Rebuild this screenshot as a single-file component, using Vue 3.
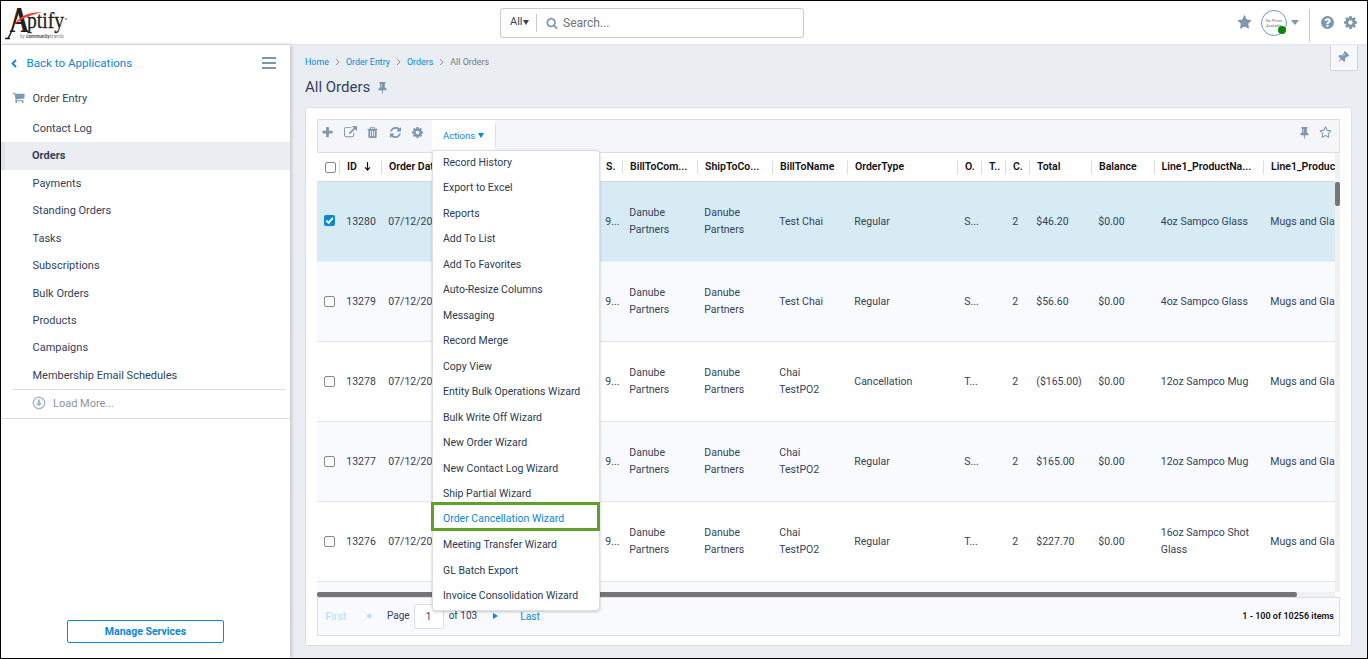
<script setup>
import { ref, computed } from 'vue'

const icons = {
  cog: 'M1152 896q0-106-75-181t-181-75-181 75-75 181 75 181 181 75 181-75 75-181zm512-109v222q0 12-8 23t-20 13l-185 28q-19 54-39 91 35 50 107 138 10 12 10 25t-9 23q-27 37-99 108t-94 71q-12 0-26-9l-138-108q-44 23-91 38-16 136-29 186-7 28-36 28h-222q-14 0-24.5-8.5t-11.5-21.5l-28-184q-49-16-90-37l-141 107q-10 9-25 9-14 0-25-11-126-114-165-168-7-10-7-23 0-12 8-23 15-21 51-66.5t54-70.5q-27-50-41-99l-183-27q-13-2-21-12.5t-8-23.5v-222q0-12 8-23t19-13l186-28q14-46 39-92-40-57-107-138-10-12-10-24 0-10 9-23 26-36 98.5-107.5t94.5-71.5q13 0 26 10l138 107q44-23 91-38 16-136 29-186 7-28 36-28h222q14 0 24.5 8.5t11.5 21.5l28 184q49 16 90 37l142-107q9-9 24-9 13 0 25 10 129 119 165 170 7 8 7 22 0 12-8 23-15 21-51 66.5t-54 70.5q26 50 41 98l183 28q13 2 21 12.5t8 23.5z',
  star: 'M1728 647q0 22-26 48l-363 354 86 500q1 7 1 20 0 21-10.5 35.5t-30.5 14.5q-19 0-40-12l-449-236-449 236q-22 12-40 12-21 0-31.5-14.5t-10.5-35.5q0-6 2-20l86-500-364-354q-25-27-25-48 0-37 56-46l502-73 225-455q19-41 49-41t49 41l225 455 502 73q56 9 56 46z',
  starO: 'M1201 1004l306-297-422-62-189-382-189 382-422 62 306 297-73 421 378-199 377 199zm527-357q0 22-26 48l-363 354 86 500q1 7 1 20 0 50-41 50-19 0-40-12l-449-236-449 236q-22 12-40 12-21 0-31.5-14.5t-10.5-35.5q0-6 2-20l86-500-364-354q-25-27-25-48 0-37 56-46l502-73 225-455q19-41 49-41t49 41l225 455 502 73q56 9 56 46z',
  search: 'M1216 832q0-185-131.5-316.5t-316.5-131.5-316.5 131.5-131.5 316.5 131.5 316.5 316.5 131.5 316.5-131.5 131.5-316.5zm512 832q0 52-38 90t-90 38q-54 0-90-38l-343-342q-179 124-399 124-143 0-273.5-55.5t-225-150-150-225-55.5-273.5 55.5-273.5 150-225 225-150 273.5-55.5 273.5 55.5 225 150 150 225 55.5 273.5q0 220-124 399l343 343q37 37 37 90z',
  refresh: 'M1639 1056q0 5-1 7-64 268-268 434.5t-478 166.5q-146 0-282.5-55t-243.5-157l-129 129q-19 19-45 19t-45-19-19-45v-448q0-26 19-45t45-19h448q26 0 45 19t19 45-19 45l-137 137q71 66 161 102t187 36q134 0 250-65t186-179q11-17 53-117 8-23 30-23h192q13 0 22.5 9.5t9.5 22.5zm25-800v448q0 26-19 45t-45 19h-448q-26 0-45-19t-19-45 19-45l138-138q-148-137-349-137-134 0-250 65t-186 179q-11 17-53 117-8 23-30 23h-199q-13 0-22.5-9.5t-9.5-22.5v-7q65-268 270-434.5t480-166.5q146 0 284 55.5t245 156.5l130-129q19-19 45-19t45 19 19 45z',
  plus: 'M1600 736v192q0 40-28 68t-68 28h-416v416q0 40-28 68t-68 28h-192q-40 0-68-28t-28-68v-416h-416q-40 0-68-28t-28-68v-192q0-40 28-68t68-28h416v-416q0-40 28-68t68-28h192q40 0 68 28t28 68v416h416q40 0 68 28t28 68z',
  external: 'M1408 928v320q0 119-84.5 203.5t-203.5 84.5h-832q-119 0-203.5-84.5t-84.5-203.5v-832q0-119 84.5-203.5t203.5-84.5h704q14 0 23 9t9 23v64q0 14-9 23t-23 9h-704q-66 0-113 47t-47 113v832q0 66 47 113t113 47h832q66 0 113-47t47-113v-320q0-14 9-23t23-9h64q14 0 23 9t9 23zm384-864v512q0 26-19 45t-45 19-45-19l-176-176-652 652q-10 10-23 10t-23-10l-114-114q-10-10-10-23t10-23l652-652-176-176q-19-19-19-45t19-45 45-19h512q26 0 45 19t19 45z',
  trash: 'M704 1376v-704q0-14-9-23t-23-9h-64q-14 0-23 9t-9 23v704q0 14 9 23t23 9h64q14 0 23-9t9-23zm256 0v-704q0-14-9-23t-23-9h-64q-14 0-23 9t-9 23v704q0 14 9 23t23 9h64q14 0 23-9t9-23zm256 0v-704q0-14-9-23t-23-9h-64q-14 0-23 9t-9 23v704q0 14 9 23t23 9h64q14 0 23-9t9-23zm-544-992h448l-48-117q-7-9-17-11h-317q-10 2-17 11zm928 32v64q0 14-9 23t-23 9h-96v948q0 83-47 143.5t-113 60.5h-832q-66 0-113-58.5t-47-141.5v-952h-96q-14 0-23-9t-9-23v-64q0-14 9-23t23-9h309l70-167q15-37 54-63t79-26h320q40 0 79 26t54 63l70 167h309q14 0 23 9t9 23z',
  cart: 'M704 1536q0 52-38 90t-90 38-90-38-38-90 38-90 90-38 90 38 38 90zm896 0q0 52-38 90t-90 38-90-38-38-90 38-90 90-38 90 38 38 90zm128-1088v512q0 24-16.5 42.5t-40.5 21.5l-1044 122q13 60 13 70 0 16-24 64h920q26 0 45 19t19 45-19 45-45 19h-1024q-26 0-45-19t-19-45q0-11 8-31.5t16-36 21.5-40 15.5-29.5l-177-823h-204q-26 0-45-19t-19-45 19-45 45-19h256q16 0 28.5 6.5t19.5 15.5 13 24.5 8 26 5.5 29.5 4.5 26h1201q26 0 45 19t19 45z',
  pin: 'M800 864v-448q0-14-9-23t-23-9-23 9-9 23v448q0 14 9 23t23 9 23-9 9-23zm672 352q0 26-19 45t-45 19h-429l-51 483q-2 12-10.5 20.5t-20.5 8.5h-1q-27 0-32-27l-76-485h-404q-26 0-45-19t-19-45q0-123 78.5-221.5t177.5-98.5v-512q-52 0-90-38t-38-90 38-90 90-38h640q52 0 90 38t38 90-38 90-90 38v512q99 0 177.5 98.5t78.5 221.5z',
  help: 'M1024 1376v-192q0-14-9-23t-23-9h-192q-14 0-23 9t-9 23v192q0 14 9 23t23 9h192q14 0 23-9t9-23zm256-672q0-88-55.5-163t-138.5-116-170-41q-243 0-371 213-15 24 8 42l132 100q7 6 19 6 16 0 25-12 53-68 86-92 34-24 86-24 48 0 85.5 26t37.5 59q0 38-20 61t-68 45q-63 28-115.5 86.5t-52.5 125.5v36q0 14 9 23t23 9h192q14 0 23-9t9-23q0-19 21.5-49.5t54.5-49.5q32-18 49-28.5t46-35 44.5-48 28-60.5 12.5-81zm384 192q0 209-103 385.5t-279.5 279.5-385.5 103-385.5-103-279.5-279.5-103-385.5 103-385.5 279.5-279.5 385.5-103 385.5 103 279.5 279.5 103 385.5z'
}

const tools = ['plus', 'external', 'trash', 'refresh', 'cog']

const activeNav = ref('Orders')
const nav = [
  'Contact Log',
  'Orders',
  'Payments',
  'Standing Orders',
  'Tasks',
  'Subscriptions',
  'Bulk Orders',
  'Products',
  'Campaigns',
  'Membership Email Schedules'
]

const crumbs = ['Home', 'Order Entry', 'Orders']

const menuOpen = ref(true)
const selectedAction = ref('Order Cancellation Wizard')
const actions = [
  'Record History',
  'Export to Excel',
  'Reports',
  'Add To List',
  'Add To Favorites',
  'Auto-Resize Columns',
  'Messaging',
  'Record Merge',
  'Copy View',
  'Entity Bulk Operations Wizard',
  'Bulk Write Off Wizard',
  'New Order Wizard',
  'New Contact Log Wizard',
  'Ship Partial Wizard',
  'Order Cancellation Wizard',
  'Meeting Transfer Wizard',
  'GL Batch Export',
  'Invoice Consolidation Wizard'
]

const columns = [
  { key: 'id', title: 'ID', width: 42, sorted: true },
  { key: 'date', title: 'Order Date', width: 217 },
  { key: 's', title: 'S.', width: 24 },
  { key: 'billCompany', title: 'BillToCom...', width: 75 },
  { key: 'shipCompany', title: 'ShipToCo...', width: 75 },
  { key: 'billName', title: 'BillToName', width: 75 },
  { key: 'type', title: 'OrderType', width: 110 },
  { key: 'o', title: 'O.', width: 24 },
  { key: 't', title: 'T..', width: 24 },
  { key: 'c', title: 'C.', width: 24 },
  { key: 'total', title: 'Total', width: 62 },
  { key: 'balance', title: 'Balance', width: 62.5 },
  { key: 'line1', title: 'Line1_ProductNa...', width: 109.5 },
  { key: 'category', title: 'Line1_ProductCategory', width: 140 }
]

const gridColumns = computed(() => '23px ' + columns.map(c => c.width + 'px').join(' '))

const base = {
  date: '07/12/2022',
  s: '9...',
  billCompany: 'Danube Partners',
  shipCompany: 'Danube Partners',
  t: '',
  c: '2',
  balance: '$0.00',
  category: 'Mugs and Glasses'
}

const orders = ref([
  { ...base, id: 13280, billName: 'Test Chai', type: 'Regular', o: 'S...', total: '$46.20', line1: '4oz Sampco Glass', checked: true },
  { ...base, id: 13279, billName: 'Test Chai', type: 'Regular', o: 'S...', total: '$56.60', line1: '4oz Sampco Glass', checked: false },
  { ...base, id: 13278, billName: 'Chai TestPO2', type: 'Cancellation', o: 'T...', total: '($165.00)', line1: '12oz Sampco Mug', checked: false },
  { ...base, id: 13277, billName: 'Chai TestPO2', type: 'Regular', o: 'S...', total: '$165.00', line1: '12oz Sampco Mug', checked: false },
  { ...base, id: 13276, billName: 'Chai TestPO2', type: 'Regular', o: 'T...', total: '$227.70', line1: '16oz Sampco Shot Glass', checked: false }
])
</script>

<template>
  <div class="app">
    <header class="topbar">
      <svg class="logo" width="66" height="34" viewBox="0 0 66 34">
        <text class="logo-a" x="0" y="0" transform="translate(4.500 24) scale(.76 1)">A</text>
        <path class="logo-leg" d="M0 30.500h5M2.500 30.500C6 28 9 16 14 2.500" />
        <path class="logo-swoosh" d="M8.500 18C13 8.500 24 3.500 37 4.200 26 6.800 15 10.500 8.500 18z" />
        <text class="logo-text" x="22" y="19.500" textLength="37" lengthAdjust="spacingAndGlyphs">ptify</text>
        <circle class="logo-dot" cx="61" cy="11" r="1" />
        <text class="logo-by" x="15" y="30" textLength="44"
          lengthAdjust="spacingAndGlyphs">by <tspan class="logo-strong">community</tspan>brands</text>
      </svg>

      <div class="search">
        <span class="scope">All<i class="caret-sm"></i></span>
        <svg class="icon" width="12" height="12" viewBox="0 0 1792 1792"><path :d="icons.search" /></svg>
        <span class="placeholder">Search...</span>
      </div>

      <div class="top-tools">
        <svg class="icon" width="15" height="15" viewBox="0 0 1792 1792"><path :d="icons.star" /></svg>
        <div class="avatar">
          <span>No Photo</span>
          <span>Available</span>
          <i class="online"></i>
        </div>
        <i class="caret"></i>
        <i class="divider"></i>
        <svg class="icon help" width="15" height="15" viewBox="0 0 1792 1792"><path :d="icons.help" /></svg>
        <svg class="icon" width="15" height="15" viewBox="0 0 1792 1792"><path :d="icons.cog" /></svg>
      </div>
    </header>

    <div class="body">
      <aside class="sidebar">
        <div class="back">
          <svg width="6" height="9" viewBox="0 0 6 9"><path d="M5 1L1.500 4.500 5 8" /></svg>
          <span>Back to Applications</span>
          <i class="burger"><b></b><b></b><b></b></i>
        </div>
        <div class="nav-title">
          <svg class="icon" width="13" height="13" viewBox="0 0 1792 1792"><path :d="icons.cart" /></svg>
          <span>Order Entry</span>
        </div>
        <ul class="nav">
          <li v-for="item in nav" :key="item" :class="{ active: item === activeNav }" @click="activeNav = item">{{ item }}</li>
        </ul>
        <div class="load-more">
          <svg width="14" height="14" viewBox="0 0 14 14">
            <circle cx="7" cy="7" r="5.700" />
            <path d="M5.800 3.500h2.400v3.500h2L7 10.400 3.800 7h2z" />
          </svg>
          <span>Load More...</span>
        </div>
        <button class="manage">Manage Services</button>
      </aside>

      <main class="content">
        <nav class="crumbs">
          <template v-for="c in crumbs" :key="c">
            <a>{{ c }}</a>
            <svg width="5" height="8" viewBox="0 0 5 8"><path d="M1 1l3 3-3 3" /></svg>
          </template>
          <span>All Orders</span>
        </nav>
        <h1>
          All Orders
          <svg class="icon" width="13" height="13" viewBox="0 0 1792 1792"><path :d="icons.pin" transform="translate(128)" /></svg>
        </h1>
        <div class="pin-tab">
          <svg class="icon" width="13" height="13" viewBox="0 0 1792 1792"><path :d="icons.pin" transform="rotate(45 896 896) translate(128)" /></svg>
        </div>

        <section class="card">
          <div class="toolbar">
            <div class="tools">
              <svg v-for="t in tools" :key="t" class="icon" width="13" height="13" viewBox="0 0 1792 1792"><path :d="icons[t]" /></svg>
            </div>
            <div class="actions" @click="menuOpen = !menuOpen">
              <span>Actions</span><i class="caret-blue"></i>
              <ul v-if="menuOpen" class="menu">
                <li v-for="a in actions" :key="a" :class="{ picked: a === selectedAction }">{{ a }}</li>
              </ul>
            </div>
            <i class="tool-sep"></i>
            <div class="view-tools">
              <svg class="icon" width="13" height="13" viewBox="0 0 1792 1792"><path :d="icons.pin" transform="translate(128)" /></svg>
              <svg class="icon" width="13" height="13" viewBox="0 0 1792 1792"><path :d="icons.starO" /></svg>
            </div>
          </div>

          <div class="grid">
            <div class="grid-main">
              <div class="row head" :style="{ gridTemplateColumns: gridColumns }">
                <div class="check"><i class="box"></i></div>
                <div v-for="col in columns" :key="col.key" class="th">
                  {{ col.title }}
                  <svg v-if="col.sorted" width="7" height="9" viewBox="0 0 7 9"><path d="M3.500 0v7.500M1 5.300l2.500 2.700L6 5.300" /></svg>
                </div>
              </div>
              <div v-for="o in orders" :key="o.id" class="row" :class="{ selected: o.checked }"
                :style="{ gridTemplateColumns: gridColumns }">
                <div class="check">
                  <i class="box" :class="{ on: o.checked }" @click="o.checked = !o.checked">
                    <svg v-if="o.checked" width="11" height="11" viewBox="0 0 11 11"><path d="M2.300 5.500l2.300 2.300 4.200-5" /></svg>
                  </i>
                </div>
                <div v-for="col in columns" :key="col.key" class="td" :class="{ single: col.key === 'category' }">{{ o[col.key] }}</div>
              </div>
              <div class="rest"></div>
            </div>
            <div class="vtrack"><i></i></div>
          </div>
          <div class="htrack"><i></i></div>

          <div class="pager">
            <span class="off first">First</span>
            <i class="prev"></i>
            <span class="page">Page</span>
            <span class="page-no">1</span>
            <span class="of">of 103</span>
            <i class="next"></i>
            <span class="last">Last</span>
            <span class="count">1 - 100 of 10256 items</span>
          </div>
        </section>
      </main>
    </div>
  </div>
</template>

<style>
body {
  font-family: Roboto, 'Liberation Sans', sans-serif;
}
</style>

<style scoped>
* {
  box-sizing: border-box;
}
.app {
  width: 1368px;
  height: 659px;
  border: 1px solid #000;
  overflow: hidden;
  background: #eaedf2;
  color: #32435a;
  font-size: 11px;
}
ul {
  list-style: none;
  margin: 0;
  padding: 0;
}
svg {
  display: block;
  flex: none;
}
.icon {
  fill: #7d97ad;
}

/* top bar */
.topbar {
  height: 44px;
  background: #fff;
  border-bottom: 1px solid #e3e6ea;
  display: flex;
}
.logo {
  margin: 7px 0 0 4px;
  overflow: visible;
}
.logo-a {
  font: bold 35px 'Liberation Serif', serif;
  fill: #1f1f21;
}
.logo-leg {
  stroke: #1f1f21;
  stroke-width: 1.5;
  fill: none;
}
.logo-swoosh {
  fill: #f03a2c;
}
.logo-text {
  font: 23px 'Liberation Serif', serif;
  fill: #1f1f21;
  stroke: #1f1f21;
  stroke-width: .3;
}
.logo-dot {
  fill: #888;
}
.logo-by {
  font-size: 5.5px;
  fill: #8a8a8e;
}
.logo-strong {
  font-weight: bold;
  fill: #55555c;
}
.search {
  width: 304px;
  height: 30px;
  margin: 7px 0 0 429px;
  border: 1px solid #c8cacc;
  border-radius: 3px;
  display: flex;
  align-items: center;
}
.scope {
  width: 36px;
  height: 18px;
  line-height: 15px;
  padding-left: 9px;
  border-right: 1px solid #c8cacc;
  display: flex;
}
.caret-sm {
  margin: 6px 0 0 0;
  border: 3px solid transparent;
  border-top: 5px solid #32435a;
  border-bottom: 0;
}
.search .icon {
  margin: -1px 0 0 9px;
}
.placeholder {
  margin-left: 5px;
  font-size: 12px;
  color: #6d7278;
}
.top-tools {
  display: flex;
  align-items: center;
  margin-left: auto;
  padding-right: 9px;
}
.avatar {
  position: relative;
  width: 26px;
  height: 26px;
  margin-left: 9px;
  border: 1px solid #7d97ad;
  border-radius: 50%;
  font-size: 4px;
  line-height: 5px;
  color: #777;
  display: flex;
  flex-direction: column;
  align-items: center;
  justify-content: center;
}
.online {
  position: absolute;
  right: 0;
  bottom: 1px;
  width: 8px;
  height: 8px;
  border-radius: 50%;
  background: #0a850a;
}
.caret {
  margin-left: 4px;
  border: 4px solid transparent;
  border-top: 5px solid #7d97ad;
  border-bottom: 0;
}
.divider {
  width: 1px;
  height: 33px;
  margin: 6px 10px 0 10px;
  background: #c8cacc;
}
.help {
  margin-right: 8px;
}

/* sidebar */
.body {
  display: flex;
  height: 613px;
}
.sidebar {
  width: 289px;
  background: #fff;
  box-shadow: 1px 0 4px rgba(0, 0, 0, .22);
  display: flex;
  flex-direction: column;
}
.back {
  display: flex;
  align-items: center;
  height: 36px;
  padding: 0 14px 0 10px;
  color: #0c86d6;
  font-size: 11.600px;
}
.back svg {
  fill: none;
  stroke: #0c86d6;
  stroke-width: 1.8;
  margin-right: 9.500px;
}
.back span {
  margin-top: -1px;
}
.burger {
  margin-left: auto;
  width: 14px;
  display: grid;
  gap: 3px;
}
.burger b {
  height: 2px;
  background: #7d97ad;
}
.nav-title {
  height: 34px;
  display: flex;
  align-items: center;
  padding-left: 11px;
}
.nav-title svg {
  margin-top: -1px;
}
.nav-title span {
  margin-left: 7.500px;
}
.nav {
  border-bottom: 1px solid #dcdee1;
  margin: 0 4px 0 11px;
}
.nav li {
  height: 27.430px;
  line-height: 27.100px;
  padding-left: 20.500px;
}
.nav li.active {
  margin: 0 -4px 0 -11px;
  padding-left: 27px;
  border-left: 4px solid #dfe2e7;
  background: #eaedf2;
  font-weight: bold;
}
.load-more {
  height: 29px;
  display: flex;
  align-items: center;
  padding: 0 0 2px 31px;
  color: #8b949e;
  border-bottom: 1px solid #dcdee1;
}
.load-more svg {
  margin-right: 7px;
  fill: #a9b9c9;
}
.load-more circle {
  fill: none;
  stroke: #a9b9c9;
  stroke-width: 1.5;
}
.manage {
  margin: auto auto 15px 66px;
  width: 157px;
  height: 23px;
  padding: 0;
  background: #fff;
  border: 1px solid #0c86d6;
  border-radius: 2px;
  color: #0c86d6;
  font: bold 10.500px Roboto, sans-serif;
}

/* content */
.content {
  position: relative;
  flex: 1;
  padding: 0 15px 0 15px;
}
.crumbs {
  height: 34px;
  display: flex;
  align-items: center;
  gap: 6px;
  font-size: 8.900px;
  color: #75797f;
}
.crumbs a {
  color: #0c86d6;
}
.crumbs svg {
  fill: none;
  stroke: #8b949e;
  stroke-width: 1;
}
h1 {
  display: flex;
  align-items: center;
  gap: 5px;
  height: 17px;
  margin: -1px 0 12px;
  font-size: 15px;
  font-weight: 400;
}
h1 svg {
  margin-top: 2px;
}
.pin-tab {
  position: absolute;
  right: 9px;
  top: 0;
  width: 28px;
  height: 26px;
  padding: 0 3px 2px 0;
  border: 1px solid #d2d5da;
  border-top: 0;
  border-radius: 0 0 2px 2px;
  background: #f7f8fc;
  display: grid;
  place-items: center;
}
.card {
  width: 1047px;
  height: 539px;
  padding: 11px;
  background: #fff;
  border: 1px solid #dcdee1;
  border-radius: 3px;
}
.toolbar {
  height: 34px;
  display: flex;
  border: 1px solid #dcdee1;
  background: #f5f6fa;
}
.tools {
  display: flex;
  gap: 9.500px;
  padding: 6px 0 0 3px;
  width: 114px;
}
.actions {
  position: relative;
  width: 63px;
  height: 31px;
  padding-left: 11px;
  background: #fff;
  display: flex;
  align-items: center;
  color: #0c86d6;
  font-size: 9.500px;
}
.caret-blue {
  margin-left: 3px;
  border: 3px solid transparent;
  border-top: 5px solid #0c86d6;
  border-bottom: 0;
}
.tool-sep {
  width: 1px;
  height: 23px;
  margin-top: 4px;
  background: #dcdee1;
}
.menu {
  position: absolute;
  z-index: 2;
  left: 0;
  top: 30px;
  width: 168px;
  height: 461px;
  background: #fff;
  border: 1px solid #dcdee1;
  border-radius: 0 4px 4px 4px;
  box-shadow: 0 1px 3px rgba(0, 0, 0, .2);
  color: #2c3b4e;
  font-size: 10.500px;
}
.menu li {
  height: 25.470px;
  line-height: 23px;
  padding-left: 10px;
  white-space: nowrap;
}
.menu li.picked {
  height: 29px;
  line-height: 28px;
  margin: -5.500px -1px 1.970px -2px;
  padding-left: 9px;
  border: 3px solid #5fa026;
  color: #0c86d6;
}
.view-tools {
  display: flex;
  gap: 9.500px;
  margin-left: auto;
  padding: 6px 7px 0 0;
}

/* grid */
.grid {
  display: flex;
  height: 439px;
}
.grid-main {
  width: 1018px;
  overflow: hidden;
}
.row {
  display: grid;
  width: 1091px;
  height: 80px;
  border-bottom: 1px solid #e3e5ea;
  align-items: center;
  padding-bottom: 1px;
}
.row:nth-child(odd) {
  background: #f9fafe;
}
.row.selected {
  background: #d7ebf4;
  border-bottom-color: #e6f1f8;
}
.row.selected .check {
  padding-bottom: 2px;
}
.row.head {
  height: 29px;
  background: #fff;
  border-bottom: 1px solid #d5d9dd;
  color: #111;
  font-weight: 600;
  font-size: 10.500px;
  padding: 0;
}
.th {
  display: flex;
  align-items: center;
  gap: 7px;
  height: 14px;
  margin: -1px 0 0 -1px;
  padding-left: 7px;
  white-space: nowrap;
  overflow: hidden;
  border-left: 1px solid #dcdee1;
}
.th svg {
  fill: none;
  stroke: #111;
  stroke-width: 1.2;
}
.td {
  padding: 0 8px 0 6.300px;
  line-height: 17px;
  font-size: 10.500px;
}
.single {
  white-space: nowrap;
}
.check {
  padding-left: 7px;
}
.head .check {
  padding-left: 8px;
}
.box {
  display: block;
  width: 11px;
  height: 11px;
  background: #fff;
  border: 1px solid #85888c;
  border-radius: 2px;
}
.box.on {
  background: #0c86d6;
  border: 0;
}
.box svg {
  fill: none;
  stroke: #fff;
  stroke-width: 1.8;
}
.rest {
  height: 10px;
  background: #f9fafe;
}
.vtrack {
  width: 5px;
  padding-top: 29px;
  background: #f1f1f1;
}
.vtrack i {
  display: block;
  height: 24px;
  border-radius: 2px;
  background: #767474;
}
.htrack {
  width: 1018px;
  height: 5px;
  background: #f1f1f1;
}
.htrack i {
  display: block;
  width: 980px;
  height: 5px;
  border-radius: 2px;
  background: #767474;
}
.pager {
  height: 39px;
  display: flex;
  align-items: center;
  border: 1px solid #dcdee1;
  background: #f9fafe;
  padding: 0 5px 2px 7.500px;
  font-size: 10px;
}
.off {
  color: #b4dcf3;
}
.first {
  width: 40.500px;
  margin-top: 1px;
  font-size: 10.500px;
}
.prev,
.next {
  border: 3px solid transparent;
}
.prev {
  border-right: 5px solid #b4dcf3;
  border-left: 0;
}
.next {
  border-left: 5px solid #0c86d6;
  border-right: 0;
  margin-left: 16px;
}
.page {
  margin-left: 16px;
}
.page-no {
  width: 30px;
  height: 25px;
  margin: 1px 5px 0 4px;
  line-height: 24px;
  text-align: center;
  background: #fff;
  border: 1px solid #dcdee1;
  border-radius: 2px;
}
.last {
  margin: 1px 0 0 22px;
  color: #0c86d6;
  font-size: 10.300px;
}
.count {
  margin-left: auto;
  color: #111;
  font-weight: 600;
  font-size: 9px;
}
</style>
